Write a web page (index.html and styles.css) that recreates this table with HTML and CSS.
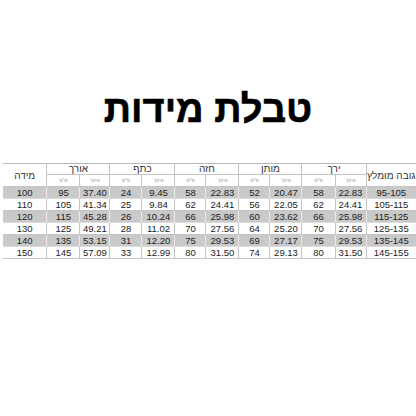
FILE: index.html
```html
<!DOCTYPE html>
<html lang="he" dir="rtl">
<head>
<meta charset="utf-8">
<link rel="stylesheet" href="styles.css">
</head>
<body>
<div class="page">
  <h1 class="title">טבלת מידות</h1>
  <table class="sizes">
    <colgroup>
      <col class="c-h">
      <col class="c31"><col class="c33">
      <col class="c32"><col class="c31">
      <col class="c33"><col class="c31">
      <col class="c33"><col class="c32">
      <col class="c30"><col class="c33">
      <col class="c-s">
    </colgroup>
    <thead>
      <tr class="r1">
        <th rowspan="2" class="big">גובה מומלץ</th>
        <th colspan="2">ירך</th>
        <th colspan="2">מותן</th>
        <th colspan="2">חזה</th>
        <th colspan="2">כתף</th>
        <th colspan="2">אורך</th>
        <th rowspan="2" class="big">מידה</th>
      </tr>
      <tr class="r2">
        <th class="sub">אינץ'</th><th class="sub">ס"מ</th>
        <th class="sub">אינץ'</th><th class="sub">ס"מ</th>
        <th class="sub">אינץ'</th><th class="sub">ס"מ</th>
        <th class="sub">אינץ'</th><th class="sub">ס"מ</th>
        <th class="sub">אינץ'</th><th class="sub">ס"מ</th>
      </tr>
    </thead>
    <tbody>
      <tr class="g"><td>95-105</td><td>22.83</td><td>58</td><td>20.47</td><td>52</td><td>22.83</td><td>58</td><td>9.45</td><td>24</td><td>37.40</td><td>95</td><td>100</td></tr>
      <tr><td>105-115</td><td>24.41</td><td>62</td><td>22.05</td><td>56</td><td>24.41</td><td>62</td><td>9.84</td><td>25</td><td>41.34</td><td>105</td><td>110</td></tr>
      <tr class="g"><td>115-125</td><td>25.98</td><td>66</td><td>23.62</td><td>60</td><td>25.98</td><td>66</td><td>10.24</td><td>26</td><td>45.28</td><td>115</td><td>120</td></tr>
      <tr><td>125-135</td><td>27.56</td><td>70</td><td>25.20</td><td>64</td><td>27.56</td><td>70</td><td>11.02</td><td>28</td><td>49.21</td><td>125</td><td>130</td></tr>
      <tr class="g"><td>135-145</td><td>29.53</td><td>75</td><td>27.17</td><td>69</td><td>29.53</td><td>75</td><td>12.20</td><td>31</td><td>53.15</td><td>135</td><td>140</td></tr>
      <tr><td>145-155</td><td>31.50</td><td>80</td><td>29.13</td><td>74</td><td>31.50</td><td>80</td><td>12.99</td><td>33</td><td>57.09</td><td>145</td><td>150</td></tr>
    </tbody>
  </table>
</div>
</body>
</html>
```
FILE: styles.css
```css
html, body {
  margin: 0;
  padding: 0;
  background: #ffffff;
}
.page {
  width: 416px;
  height: 416px;
  padding-top: 86px;
  box-sizing: border-box;
  font-family: "Liberation Sans", Arial, sans-serif;
  color: #222;
}
.title {
  margin: 0;
  height: 77px;
  text-align: center;
  font-family: "Liberation Sans", Arial, sans-serif;
  font-weight: 700;
  font-size: 38px;
  line-height: 46px;
  color: #000;
  -webkit-text-stroke: 0.6px #000;
}
.sizes {
  width: 413px;
  border-collapse: collapse;
  table-layout: fixed;
  font-size: 9.5px;
}
.c-h { width: 50px; }
.c-s { width: 44px; }
.c30 { width: 30px; }
.c31 { width: 31px; }
.c32 { width: 32px; }
.c33 { width: 33px; }
.sizes th, .sizes td {
  border: 1px solid #c4c4c4;
  padding: 0;
  text-align: center;
  font-weight: 400;
  white-space: nowrap;
}
.sizes thead th {
  border-top: 1px solid #b8b8b8;
}
.r1 th {
  height: 10px;
  line-height: 10px;
  font-size: 10px;
  color: #333;
}
.r1 th.big {
  font-size: 10px;
  vertical-align: middle;
  padding-top: 2px;
}
.r2 th {
  height: 11px;
  line-height: 11px;
}
.sub {
  font-size: 5px;
  color: #999;
}
.sizes td {
  height: 11px;
  line-height: 11px;
  color: #222;
}
.sizes tr.g td {
  background: #c9c9c9;
  border-color: #dcdcdc #ebebeb;
}
.sizes th:first-child, .sizes td:first-child {
  border-right: none;
}
.sizes th:last-child, .sizes td:last-child {
  border-left: none;
}
```
